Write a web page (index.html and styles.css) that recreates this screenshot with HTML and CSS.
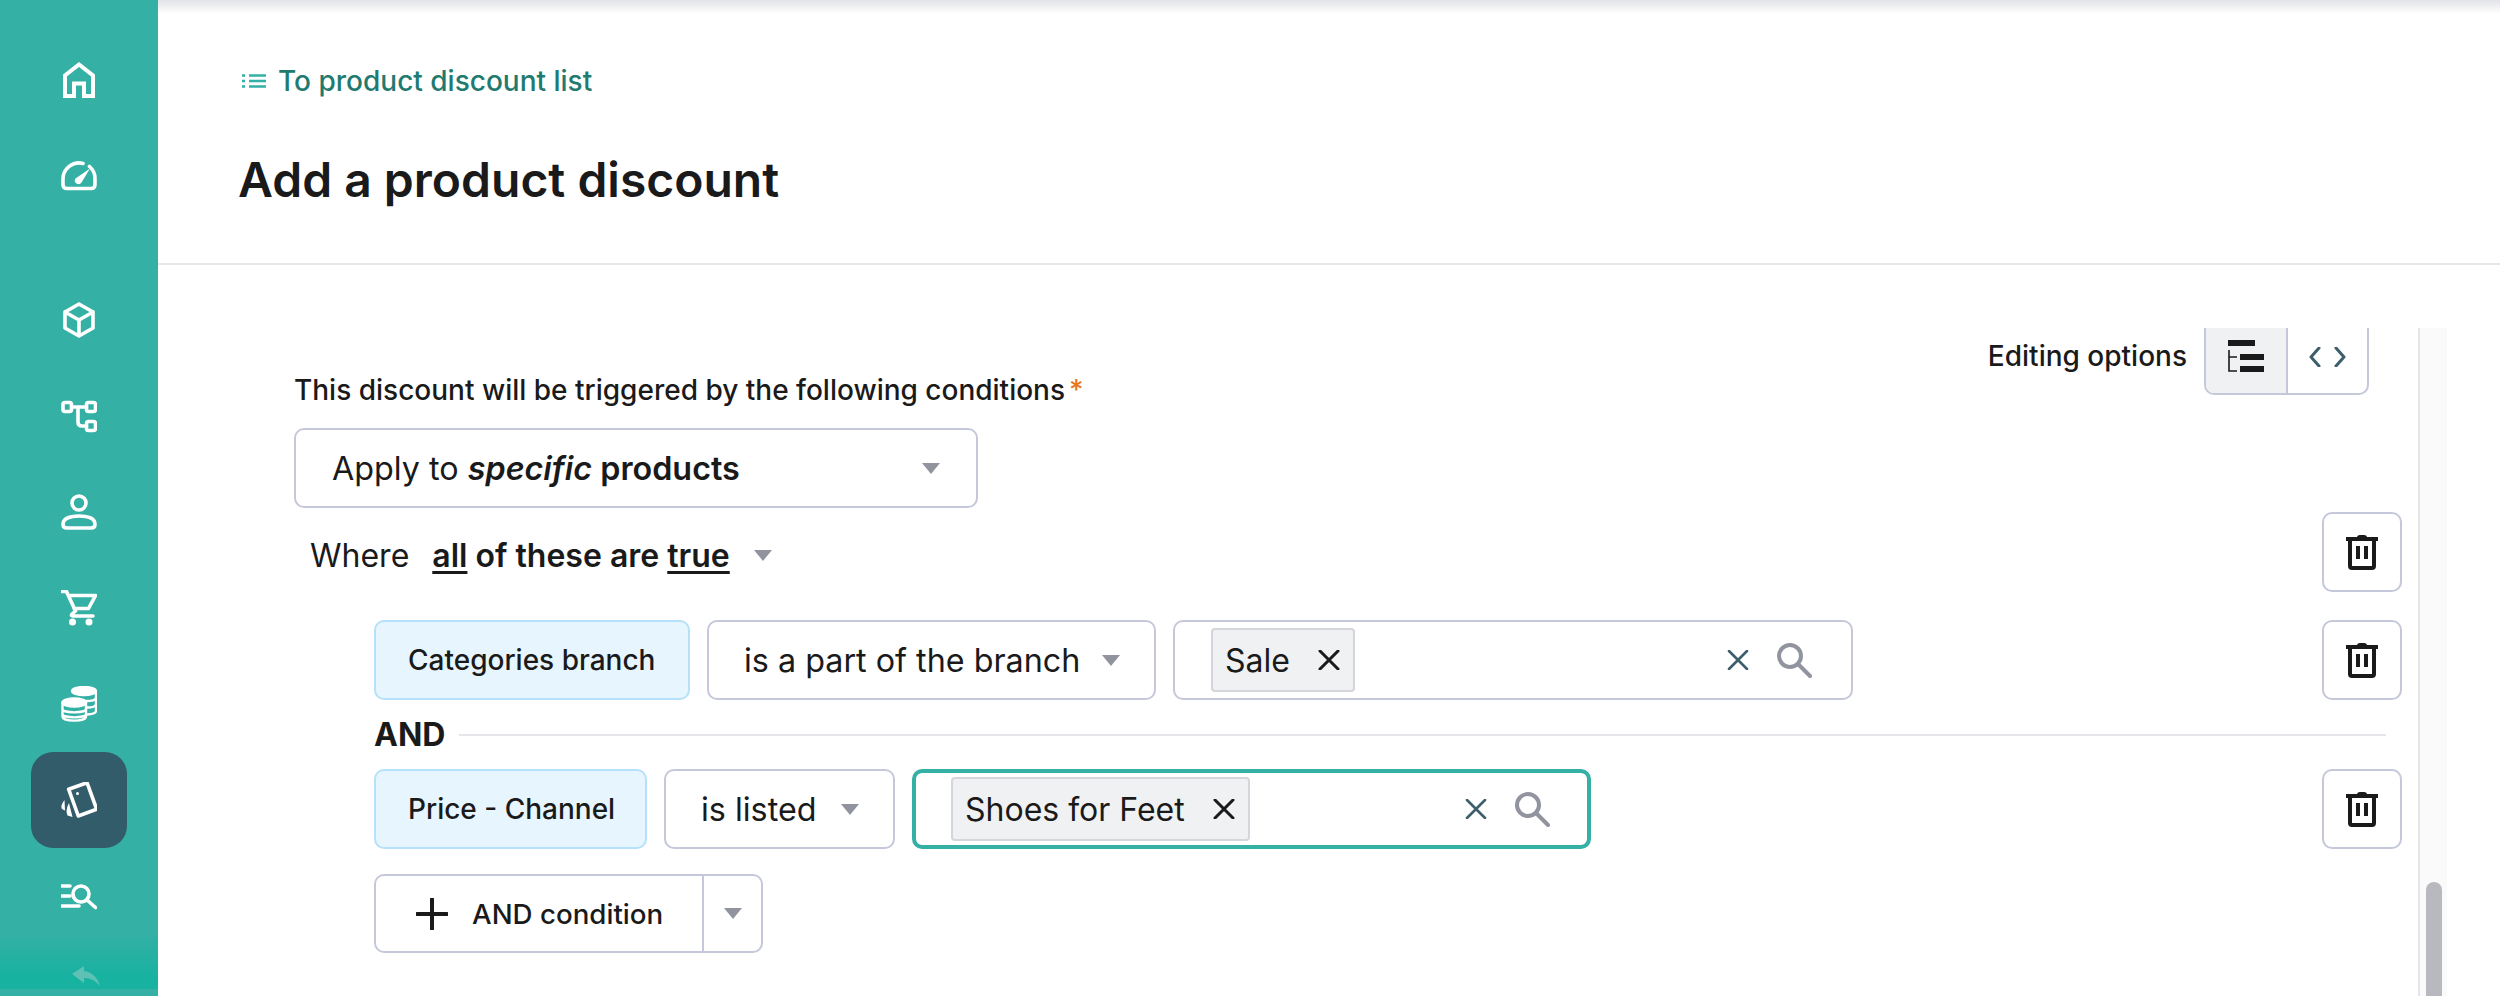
FILE: index.html
```html
<!DOCTYPE html>
<html lang="en">
<head>
<meta charset="utf-8">
<title>Add a product discount</title>
<link rel="stylesheet" href="styles.css">
</head>
<body>
<div class="app">
  <nav class="rail">
    <div class="nav-group">
      <a class="nav-item"><svg class="ico" viewBox="0 0 36 36"><path class="sq" d="M4 34V13.5L18 2.500 32 13.5V34H23V21.500H13V34Z"/></svg></a>
      <a class="nav-item"><svg class="ico" viewBox="0 0 36 36"><path d="M22 5.500A16 16 0 0 0 2 21V26.500Q2 30.500 6 30.500H30Q34 30.500 34 26.500V21A16 16 0 0 0 28.500 8.500"/><path class="fill" d="M29 10.500 20.500 24.500A3.600 3.600 0 0 1 14.500 20.500Z"/></svg></a>
    </div>
    <div class="nav-group">
      <a class="nav-item"><svg class="ico" viewBox="0 0 36 36"><path d="M18 2 32 10V26L18 34 4 26V10ZM4 10 18 18 32 10M18 18V34"/></svg></a>
      <a class="nav-item"><svg class="ico" viewBox="0 0 36 36"><rect x="2" y="4.500" width="8.500" height="9" rx="2"/><rect x="25.500" y="4.500" width="9" height="9" rx="2"/><rect x="25.500" y="23.500" width="9" height="9" rx="2"/><path d="M10.500 9H25.500M17 9V24Q17 28 21 28H25.500"/></svg></a>
      <a class="nav-item"><svg class="ico" viewBox="0 0 36 36"><circle cx="18" cy="9" r="7"/><path d="M6 34H30Q34 34 34 30.500C34 24 26 22 18 22S2 24 2 30.500Q2 34 6 34Z"/></svg></a>
      <a class="nav-item"><svg class="ico" viewBox="0 0 36 36"><path d="M1 1.500H5.500L14.500 21 11 24Q9.500 26 12 26H32M7.500 5.500H34.500L27.500 18.500H13"/><circle class="fill" cx="11.500" cy="32" r="3.500"/><circle class="fill" cx="28" cy="32" r="3.500"/></svg></a>
      <a class="nav-item"><svg class="ico" viewBox="0 0 36 36"><path class="thin" d="M35 5V25Q35 28 26 28.500M35 11.500C35 14 30 15 25 15M35 18C35 20.500 30 21.500 26 21.500"/><ellipse class="thin solid" cx="23" cy="5" rx="12" ry="4"/><path class="thin" d="M1.500 16.500V30.500C1.500 36 25 36 25 30.500V16.500M1.500 23C1.500 27.500 25 27.500 25 23M1.500 28C1.500 32.500 25 32.500 25 28"/><ellipse class="thin solid" cx="13.250" cy="16.500" rx="11.750" ry="4"/></svg></a>
      <a class="nav-item active"><svg class="ico" viewBox="0 0 36 36"><path d="M7.700 7.300 26 .7 35.700 27.300 17.300 34Z"/><circle class="fill" cx="16.500" cy="11.500" r="1.500"/><path class="fill" d="M3.500 18Q-1 24 1 27L4 28.500ZM8 21Q4 28 6.500 33.500L11.500 35Z"/></svg></a>
      <a class="nav-item"><svg class="ico" viewBox="0 0 36 36"><path d="M1 8H9M1 18H9M1 28H18M26 22 34.500 29.500"/><circle cx="20" cy="16" r="8"/></svg></a>
    </div>
    <div class="rail-fade"><svg class="reply" viewBox="0 0 28 22"><path d="M0 8 12 0V5C20 6 26 12 28 20 23 14 18 12 12 12V17Z"/></svg></div>
  </nav>

  <div class="main">
    <header class="head">
      <a class="back">
        <svg class="list-ico" viewBox="0 0 24 14"><path d="M7 1.500H24M7 7H24M7 12.500H24"/><path d="M0 1.500H3M0 7H3M0 12.500H3"/></svg>
        <span>To product discount list</span>
      </a>
      <h1 class="title">Add a product discount</h1>
    </header>

    <div class="content">
      <section class="scroll">
        <div class="top-row">
          <div class="field-label">This discount will be triggered by the following conditions<span class="req">*</span></div>
          <div class="options">
            <span class="options-label">Editing options</span>
            <div class="toggle">
              <button class="toggle-cell on">
                <svg class="tree-ico" viewBox="0 0 36 32"><path class="bar" d="M0 0H27V6H0ZM12 14H36V20H12ZM12 26H36V32H12Z"/><path class="twig" d="M1 10V31H9M1 17H9"/></svg>
              </button>
              <button class="toggle-cell">
                <svg class="code-ico" viewBox="0 0 37 20"><path d="M10 1 2 10 10 19M27 1 35 10 27 19"/></svg>
              </button>
            </div>
          </div>
        </div>

        <div class="box apply"><span class="apply-text">Apply to <b><i>specific</i> products</b></span><i class="caret"></i></div>

        <div class="where-row">
          <div class="where"><span>Where</span><b class="where-strong"><u>all</u> of these are <u>true</u></b><i class="caret"></i></div>
          <button class="trash"><svg class="trash-ico" viewBox="0 0 32 36"><path d="M0 5H32"/><path class="lid" d="M11 3.500Q11 1 14 1H18Q21 1 21 3.500Z"/><path d="M4 5V32Q4 34 6 34H26Q28 34 28 32V5M12 12V25M20 12V25"/></svg></button>
        </div>

        <div class="cond-row first">
          <div class="chip chip-cat">Categories branch</div>
          <div class="box op op-branch"><span>is a part of the branch</span><i class="caret"></i></div>
          <div class="box val">
            <span class="tag"><span class="tag-text">Sale</span><svg class="x-ico" viewBox="0 0 22 20"><path d="M2 1 20 19M20 1 2 19"/></svg></span>
            <svg class="clear-ico" viewBox="0 0 22 20"><path d="M2 1 20 19M20 1 2 19"/></svg>
            <svg class="search-ico" viewBox="0 0 36 36"><circle cx="14" cy="14" r="11"/><path d="M22 22 34 34"/></svg>
          </div>
          <button class="trash"><svg class="trash-ico" viewBox="0 0 32 36"><path d="M0 5H32"/><path class="lid" d="M11 3.500Q11 1 14 1H18Q21 1 21 3.500Z"/><path d="M4 5V32Q4 34 6 34H26Q28 34 28 32V5M12 12V25M20 12V25"/></svg></button>
        </div>

        <div class="and-row"><b class="and">AND</b><span class="and-line"></span></div>

        <div class="cond-row">
          <div class="chip chip-price">Price - Channel</div>
          <div class="box op op-listed"><span>is listed</span><i class="caret"></i></div>
          <div class="box val focus">
            <span class="tag"><span class="tag-text">Shoes for Feet</span><svg class="x-ico" viewBox="0 0 22 20"><path d="M2 1 20 19M20 1 2 19"/></svg></span>
            <svg class="clear-ico" viewBox="0 0 22 20"><path d="M2 1 20 19M20 1 2 19"/></svg>
            <svg class="search-ico" viewBox="0 0 36 36"><circle cx="14" cy="14" r="11"/><path d="M22 22 34 34"/></svg>
          </div>
          <button class="trash"><svg class="trash-ico" viewBox="0 0 32 36"><path d="M0 5H32"/><path class="lid" d="M11 3.500Q11 1 14 1H18Q21 1 21 3.500Z"/><path d="M4 5V32Q4 34 6 34H26Q28 34 28 32V5M12 12V25M20 12V25"/></svg></button>
        </div>

        <div class="add-btn">
          <span class="add-main"><svg class="plus-ico" viewBox="0 0 32 32"><path d="M16 1V31M1 16H31"/></svg><span>AND condition</span></span>
          <span class="add-drop"><i class="caret"></i></span>
        </div>
      </section>
      <aside class="track"><span class="thumb"></span></aside>
    </div>
  </div>
</div>
</body>
</html>
```

FILE: styles.css
```css
* { box-sizing: border-box; }
html, body { margin: 0; padding: 0; height: 100%; background: #fff; }
body { font-family: Inter, "Noto Sans", sans-serif; color: #1a1a1a; overflow: hidden; }
button { font: inherit; background: none; margin: 0; padding: 0; }

.app { display: flex; width: 2500px; height: 996px; overflow: hidden; }

/* rail */
.rail { position: relative; flex: 0 0 158px; background: #34b0a5; padding-top: 32px; display: flex; flex-direction: column; align-items: center; gap: 48px; }
.nav-group { display: flex; flex-direction: column; }
.nav-item { width: 96px; height: 96px; display: flex; align-items: center; justify-content: center; border-radius: 22px; }
.nav-item.active { background: #335c6b; }
.ico { width: 36px; height: 36px; fill: none; stroke: #fff; stroke-width: 3.6; stroke-linecap: round; stroke-linejoin: round; }
.ico .sq { stroke-linecap: butt; stroke-linejoin: miter; stroke-width: 4; }
.ico .fill { fill: #fff; stroke: none; }
.ico .thin { stroke-width: 2.4; }
.ico .solid { fill: #fff; }
.rail-fade { position: absolute; left: 0; right: 0; bottom: 7px; height: 56px; background: linear-gradient(#34b0a500, #17b2a0 80%); display: flex; justify-content: center; align-items: flex-end; }
.reply { width: 28px; height: 22px; margin: 0 0 1px 14px; fill: #5fc0b5; }

/* header */
.main { flex: 1; display: flex; flex-direction: column; min-width: 0; }
.head { height: 265px; border-bottom: 2px solid #e5e5ea; padding: 61px 0 0 80px; background: linear-gradient(#e2e3e8, #ffffff 14px); }
.back { display: flex; align-items: center; gap: 12px; margin-left: 4px; height: 40px; color: #1f7a70; font-size: 28px; font-weight: 500; }
.list-ico { width: 24px; height: 14px; fill: none; stroke: #34b0a5; stroke-width: 2.4; }
.title { margin: 49px 0 0; font-size: 48px; line-height: 60px; font-weight: 600; color: #1a1a1a; }

/* content */
.content { flex: 1; display: flex; padding: 63px 53px 0 0; min-height: 0; }
.scroll { flex: 1; min-width: 0; padding: 0 16px 0 137px; }
.track { flex: 0 0 29px; background: #fafafa; border-left: 2px solid #e5e5ea; padding: 554px 5px 0 6px; }
.thumb { display: block; height: 200px; border-radius: 8px; background: #b8b9be; }

.top-row { display: flex; justify-content: space-between; align-items: flex-start; height: 100px; padding-right: 33px; margin-left: -1px; }
.field-label { margin-top: 46px; font-size: 28px; line-height: 32px; font-weight: 500; }
.req { color: #e8761c; margin-left: 4px; }
.options { display: flex; align-items: flex-start; gap: 17px; }
.options-label { font-size: 28px; line-height: 57px; font-weight: 500; }
.toggle { display: flex; width: 165px; height: 67px; border: 2px solid #c5c8da; border-top: 0; border-radius: 0 0 10px 10px; overflow: hidden; }
.toggle-cell { flex: 1; border: 0; padding-top: 10px; display: flex; justify-content: center; align-items: flex-start; }
.toggle-cell.on { background: #f0f1f3; border-right: 2px solid #c5c8da; }
.tree-ico { width: 36px; height: 32px; margin-top: 2px; }
.tree-ico .bar { fill: #1a1a1a; }
.tree-ico .twig { fill: none; stroke: #1a1a1a; stroke-width: 1.6; }
.code-ico { width: 37px; height: 20px; margin-top: 9px; fill: none; stroke: #3d5f6b; stroke-width: 3; stroke-linecap: round; stroke-linejoin: round; }

.box { display: flex; align-items: center; height: 80px; background: #fff; border: 2px solid #c5c8da; border-radius: 10px; font-size: 32.3px; white-space: nowrap; }
.caret { display: block; width: 0; height: 0; border-left: 9px solid transparent; border-right: 9px solid transparent; border-top: 11px solid #91949f; flex: none; }

.apply { width: 684px; margin-left: -1px; padding: 0 36px; justify-content: space-between; }
.apply-text b { font-weight: 600; }

.where-row { display: flex; justify-content: space-between; align-items: center; margin-top: 4px; padding-left: 15px; height: 79px; }
.where { display: flex; align-items: center; font-size: 32px; padding-top: 8px; }
.where-strong { font-weight: 600; margin-left: 23px; margin-right: 24px; }
.where-strong u { text-decoration-thickness: 3px; text-underline-offset: 4px; }

.trash { flex: none; width: 80px; height: 80px; border: 2px solid #c5c8da; border-radius: 10px; display: flex; align-items: center; justify-content: center; margin-left: auto; }
.trash-ico { width: 32px; height: 36px; fill: none; stroke: #1a1a1a; stroke-width: 4; stroke-linejoin: round; }
.trash-ico .lid { fill: #1a1a1a; stroke: none; }

.cond-row { display: flex; gap: 17px; padding-left: 79px; height: 80px; align-items: stretch; }
.cond-row.first { margin-top: 29px; }
.chip { display: flex; align-items: center; padding: 0 0 0 32px; background: #e6f5fe; border: 2px solid #b5e1fa; border-radius: 10px; font-size: 28px; font-weight: 500; white-space: nowrap; }
.chip-cat { width: 316px; }
.chip-price { width: 273px; }
.op { padding: 0 34px 0 35px; justify-content: space-between; }
.op-branch { width: 449px; }
.op-listed { width: 231px; }
.val { width: 680px; padding: 0 39px 0 36px; }
.val.focus { width: 679px; border: 4px solid #34b0a5; padding: 0 37px 0 35px; }
.tag { display: flex; align-items: center; height: 64px; padding: 0 13px 0 12px; gap: 28px; background: #f0f1f3; border: 2px solid #d5d6dc; border-radius: 4px; font-size: 32px; }
.x-ico { width: 22px; height: 20px; fill: none; stroke: #1a1a1a; stroke-width: 3; stroke-linecap: round; }
.clear-ico { width: 22px; height: 20px; margin-left: auto; fill: none; stroke: #3d5f6b; stroke-width: 2.6; stroke-linecap: round; }
.search-ico { width: 36px; height: 36px; margin-left: 27px; fill: none; stroke: #91949f; stroke-width: 4; stroke-linecap: round; }

.and-row { display: flex; align-items: center; gap: 14px; height: 69px; padding: 0 16px 0 79px; }
.and { font-size: 32px; font-weight: 700; }
.and-line { flex: 1; height: 2px; background: #e5e5ea; }

.add-btn { display: flex; width: 389px; height: 79px; margin: 25px 0 0 79px; border: 2px solid #c5c8da; border-radius: 10px; }
.add-main { display: flex; align-items: center; flex: 1; padding-left: 40px; gap: 24px; font-size: 27.7px; font-weight: 500; border-right: 2px solid #c5c8da; white-space: nowrap; }
.plus-ico { width: 32px; height: 32px; fill: none; stroke: #1a1a1a; stroke-width: 4; stroke-linecap: round; }
.add-drop { flex: 0 0 57px; display: flex; align-items: center; justify-content: center; }
```
